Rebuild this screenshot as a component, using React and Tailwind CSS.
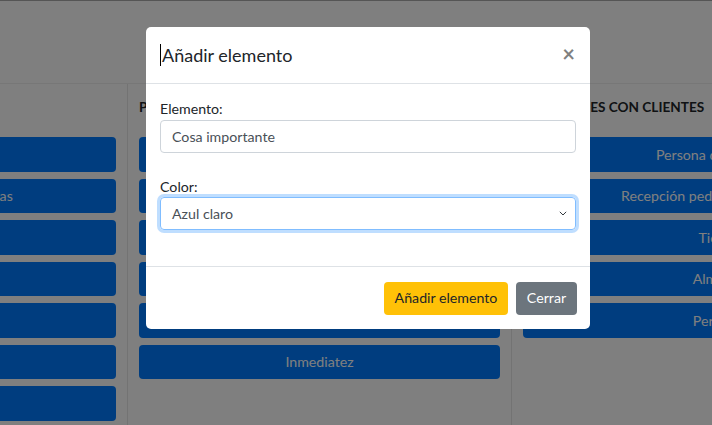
import React from "react";

const col1 = [
  "Equipo comercial",
  "Plataformas tecnológicas",
  "Marca registrada",
  "Red de distribución",
  "Personal cualificado",
  "Instalaciones",
  "Capital",
];
const col2 = [
  "Calidad",
  "Precio competitivo",
  "Personalización",
  "Diseño",
  "Confianza",
  "Inmediatez",
];
const col3 = [
  "Persona de contacto",
  "Recepción pedidos por teléfono",
  "Tienda",
  "Almacén",
  "Personal",
];

function Btn({ children }) {
  return (
    <div className="h-[34.5px] rounded-[4px] bg-[#007bff] text-white text-[14.2px] flex items-center justify-center whitespace-nowrap">
      {children}
    </div>
  );
}

function Column({ title, items, width }) {
  return (
    <div
      className={`shrink-0 border-r border-[#e6e6e6] pl-[11px] pr-[11px] pt-[13px] ${width}`}
    >
      <div className="h-[21px] text-[13.6px] font-bold text-[#212529] leading-[21px] whitespace-nowrap">
        {title}
      </div>
      <div className="mt-[19px] flex flex-col gap-[7px]">
        {items.map((t) => (
          <Btn key={t}>{t}</Btn>
        ))}
      </div>
    </div>
  );
}

export default function App() {
  return (
    <div className="relative w-[712px] h-[425px] overflow-hidden bg-white font-['Lato',sans-serif]">
      {/* page */}
      <div className="h-[84px] border-t border-b border-t-[#aaaaaa] border-b-[#eeeeee]" />
      <div className="flex ml-[-256px] h-[341px]">
        <Column title="RECURSOS CLAVE" items={col1} width="w-[384px]" />
        <Column title="PROPUESTA DE VALOR" items={col2} width="w-[384px]" />
        <Column title="RELACIONES CON CLIENTES" items={col3} width="w-[416px]" />
      </div>

      {/* backdrop */}
      <div className="absolute inset-0 bg-black/50" />

      {/* modal */}
      <div className="absolute left-[146px] top-[27px] w-[444px] bg-white rounded-[5px] text-[#212529]">
        <div className="h-[57px] border-b border-[#dee2e6] flex items-center pl-[14px] pr-[14px]">
          <span className="w-px h-[22px] bg-black mr-px" />
          <span className="text-[18px] leading-none font-normal">Añadir elemento</span>
          <span className="ml-auto text-[22px] font-bold text-black/50 leading-none pb-[2px] pr-[1px]">
            ×
          </span>
        </div>
        <div className="px-[14px] pt-[14px] pb-[36px]">
          <div className="text-[14.2px] leading-[21px] mb-[1px]">Elemento:</div>
          <div className="h-[33px] border border-[#ced4da] rounded-[4px] flex items-center px-[11px] text-[14.2px] text-[#495057]">
            Cosa importante
          </div>
          <div className="text-[14.2px] leading-[20px] mt-[24px]">Color:</div>
          <div className="h-[33px] border border-[#80bdff] rounded-[4px] flex items-center pl-[11px] pr-[8px] text-[14.2px] text-[#495057] shadow-[0_0_0_3px_rgba(0,123,255,0.25)]">
            <span>Azul claro</span>
            <svg
              className="ml-auto"
              width="8"
              height="5"
              viewBox="0 0 8 5"
              fill="none"
            >
              <path d="M0.8 0.8l3.2 3.2l3.2-3.2" stroke="#343a40" strokeWidth="1" />
            </svg>
          </div>
        </div>
        <div className="h-[63px] border-t border-[#dee2e6] flex items-center justify-end gap-[8px] pr-[13px]">
          <div className="h-[33px] w-[124px] rounded-[4px] bg-[#ffc107] text-[#212529] text-[14.2px] flex items-center justify-center">
            Añadir elemento
          </div>
          <div className="h-[33px] w-[61px] rounded-[4px] bg-[#6c757d] text-white text-[14.2px] flex items-center justify-center">
            Cerrar
          </div>
        </div>
      </div>
    </div>
  );
}
